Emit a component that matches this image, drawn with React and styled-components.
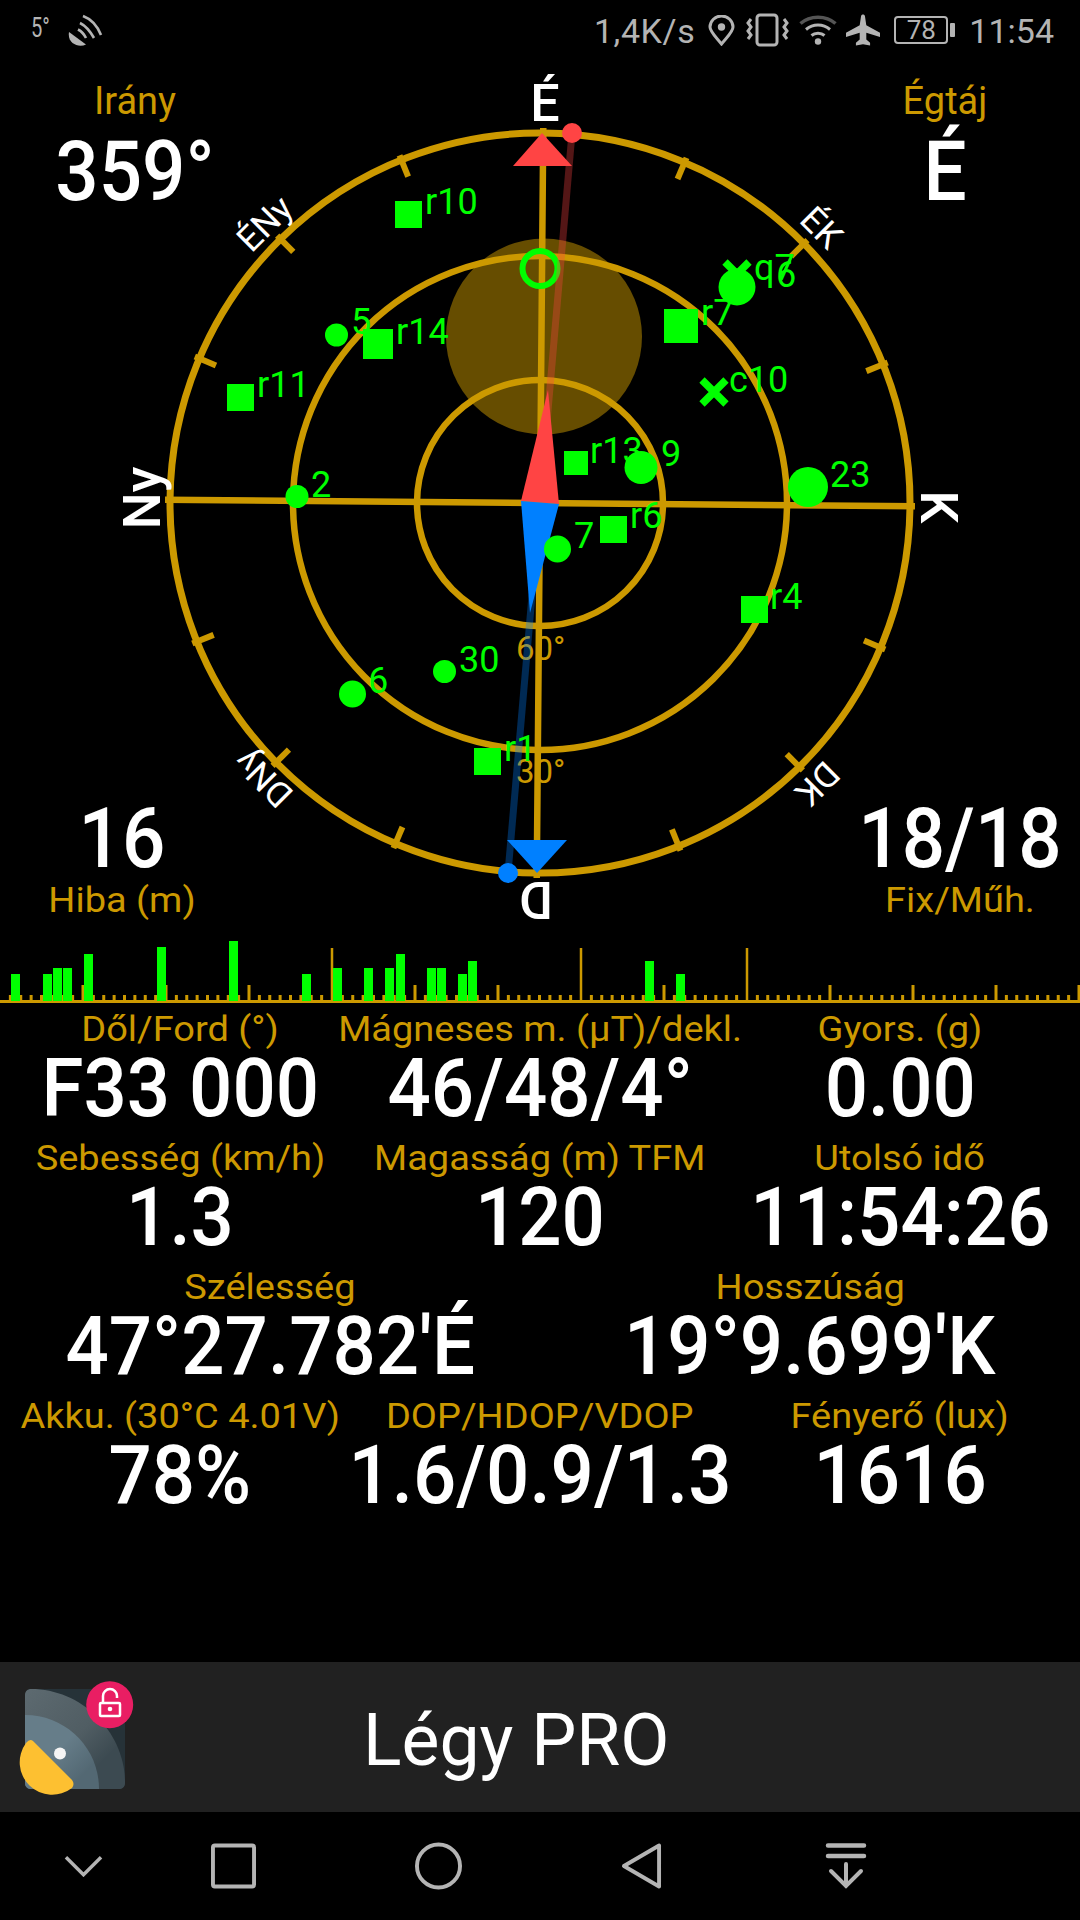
import React from "react";
import styled, { createGlobalStyle } from "styled-components";

const GOLD = "#cc9900";
const GREEN = "#00ff00";
const ROTATION = 0.5;
const CX = 540;
const CY = 503;

const GlobalStyle = createGlobalStyle`
  html, body {
    margin: 0;
    padding: 0;
    background: #000;
  }
  body {
    font-family: Roboto, "Liberation Sans", sans-serif;
    color: #fff;
  }
`;

const Screen = styled.div`
  width: 1080px;
  height: 1920px;
  background: #000;
  display: flex;
  flex-direction: column;
  overflow: hidden;
`;

const StatusBar = styled.div`
  height: 60px;
  flex: none;
  display: flex;
  align-items: center;
  justify-content: space-between;
  padding: 0 26px 0 31px;
  color: #b4b4b4;
`;

const StatusGroup = styled.div`
  display: flex;
  align-items: center;
`;

const StatusText = styled.span`
  font-size: 34px;
  line-height: 1;
  margin-top: 2px;
  margin-left: ${(p) => p.$ml || 0}px;
  letter-spacing: ${(p) => p.$spacing || 0}px;
`;

const SignalDegree = styled.span`
  display: block;
  width: 17px;
  font-size: 28px;
  line-height: 1;
  margin-top: -4px;
  transform: scaleX(0.72);
  transform-origin: left center;
`;

const StatusIcon = styled.svg`
  display: block;
  flex: none;
  margin-left: ${(p) => p.$ml || 0}px;
`;

const BatteryBox = styled.div`
  width: 54px;
  height: 28px;
  margin-left: 14px;
  box-sizing: border-box;
  border: 2px solid #b4b4b4;
  border-radius: 4px;
  display: flex;
  align-items: center;
  justify-content: center;
  font-size: 26px;
  color: #b4b4b4;
  position: relative;
  &::after {
    content: "";
    position: absolute;
    right: -9px;
    top: 5px;
    width: 5px;
    height: 14px;
    background: #b4b4b4;
    border-radius: 1px;
  }
`;

const CompassPanel = styled.div`
  position: relative;
  height: 870px;
  flex: none;
`;

const CompassSvg = styled.svg`
  display: block;
`;

const Corner = styled.div`
  position: absolute;
  ${(p) => (p.$right ? "right" : "left")}: ${(p) => p.$x}px;
  top: ${(p) => p.$y}px;
  width: ${(p) => p.$w}px;
  text-align: center;
`;

const CornerLabel = styled.div`
  color: ${GOLD};
  font-size: 38px;
  line-height: 44px;
`;

const CornerFootLabel = styled.div`
  color: ${GOLD};
  font-size: 35px;
  line-height: 44px;
  transform: scaleX(1.085);
`;

const CornerValue = styled.div`
  font-size: 83px;
  font-weight: 500;
  line-height: 84px;
  transform: scaleX(0.92);
  margin-top: ${(p) => p.$mt || 0}px;
  margin-bottom: ${(p) => p.$mb || 0}px;
`;

const Histogram = styled.svg`
  display: block;
  flex: none;
`;

const DataTable = styled.div`
  display: flex;
  flex-direction: column;
  flex: none;
  padding-top: 1px;
`;

const DataRow = styled.div`
  display: flex;
  height: 129px;
`;

const DataCell = styled.div`
  flex: 1 1 0;
  min-width: 0;
  display: flex;
  flex-direction: column;
  align-items: center;
  white-space: nowrap;
`;

const DataLabel = styled.div`
  color: ${GOLD};
  font-size: 35px;
  line-height: 38px;
  padding-top: 7px;
  transform: scaleX(1.085);
`;

const DataValue = styled.div`
  font-size: 82px;
  font-weight: 500;
  line-height: 80px;
  margin-top: -1px;
  transform: scaleX(0.93);
`;

const Spacer = styled.div`
  flex: 1;
`;

const AdBanner = styled.div`
  height: 150px;
  flex: none;
  background: #212121;
  display: flex;
  align-items: center;
  padding-left: 10px;
`;

const AdIcon = styled.svg`
  flex: none;
  display: block;
`;

const AdTitle = styled.div`
  font-size: 71.5px;
  line-height: 1;
  margin-left: 218px;
  margin-top: 8px;
`;

const NavBar = styled.div`
  height: 108px;
  flex: none;
  display: flex;
  align-items: center;
  gap: 159px;
  padding-left: 64px;
`;

const NavIcon = styled.svg`
  display: block;
  flex: none;
  margin-left: ${(p) => p.$ml || 0}px;
`;

const stroke = "#b4b4b4";

const satellites = [
  { kind: "square", x: 395, y: 201, s: 27, label: "r10", lx: 425, ly: 214 },
  { kind: "circle", x: 336.5, y: 335, r: 11.5, label: "5", lx: 351, ly: 334 },
  { kind: "square", x: 363, y: 329, s: 30, label: "r14", lx: 396, ly: 344 },
  { kind: "square", x: 227, y: 384, s: 27, label: "r11", lx: 257, ly: 397 },
  { kind: "circle", x: 297, y: 496.5, r: 11.5, label: "2", lx: 311, ly: 497 },
  { kind: "square", x: 664, y: 309, s: 34, label: "r7", lx: 701, ly: 325 },
  { kind: "cross", x: 737, y: 274, r: 12, label: "q7", lx: 754, ly: 280 },
  { kind: "circle", x: 737, y: 287, r: 18.5, label: "6", lx: 776, ly: 287 },
  { kind: "cross", x: 714, y: 392, r: 12, label: "c10", lx: 729, ly: 392 },
  { kind: "square", x: 564, y: 451, s: 24, label: "r13", lx: 590, ly: 463 },
  { kind: "circle", x: 641, y: 467.5, r: 16.5, label: "9", lx: 661, ly: 466 },
  { kind: "circle", x: 808, y: 487, r: 20, label: "23", lx: 830, ly: 487 },
  { kind: "square", x: 600, y: 516, s: 27, label: "r6", lx: 630, ly: 528 },
  { kind: "circle", x: 557.5, y: 549, r: 13.5, label: "7", lx: 574, ly: 548 },
  { kind: "square", x: 741, y: 596, s: 27, label: "r4", lx: 770, ly: 609 },
  { kind: "circle", x: 444.5, y: 671.5, r: 11.5, label: "30", lx: 459, ly: 672 },
  { kind: "circle", x: 352.5, y: 694, r: 13.5, label: "6", lx: 368, ly: 693 },
  { kind: "square", x: 474, y: 748, s: 27, label: "r1", lx: 504, ly: 761 },
];

const headings = [
  { text: "É", x: 545, y: 103, a: 0, size: 52, weight: 500 },
  { text: "K", x: 938, y: 507, a: 90, size: 52, weight: 500 },
  { text: "D", x: 536, y: 899, a: 180, size: 52, weight: 500 },
  { text: "Ny", x: 142, y: 498, a: -90, size: 52, weight: 500 },
  { text: "ÉNy", x: 265, y: 224, a: -45, size: 35, weight: 400 },
  { text: "ÉK", x: 821, y: 228, a: 45, size: 35, weight: 400 },
  { text: "DK", x: 817, y: 783, a: 135, size: 35, weight: 400 },
  { text: "DNy", x: 264, y: 778, a: -135, size: 35, weight: 400 },
];

function Satellite({ sat }) {
  return (
    <g>
      {sat.kind === "square" && (
        <rect x={sat.x} y={sat.y} width={sat.s} height={sat.s} fill={GREEN} />
      )}
      {sat.kind === "circle" && <circle cx={sat.x} cy={sat.y} r={sat.r} fill={GREEN} />}
      {sat.kind === "cross" && (
        <path
          d={`M${sat.x - sat.r} ${sat.y - sat.r}L${sat.x + sat.r} ${sat.y + sat.r}M${sat.x + sat.r} ${sat.y - sat.r}L${sat.x - sat.r} ${sat.y + sat.r}`}
          stroke={GREEN}
          strokeWidth="7.5"
        />
      )}
      <text x={sat.lx} y={sat.ly} fill={GREEN} fontSize="36" fontFamily="Roboto">
        {sat.label}
      </text>
    </g>
  );
}

function Compass() {
  const ticks = [];
  for (let i = 0; i < 16; i++) {
    if (i % 4 === 0) continue;
    ticks.push(i * 22.5);
  }
  return (
    <CompassSvg width="1080" height="870" viewBox="0 60 1080 870">
      <g transform={`rotate(${ROTATION} ${CX} ${CY})`} stroke={GOLD} fill="none">
        <circle cx={CX} cy={CY} r="370" strokeWidth="7" />
        <circle cx={CX} cy={CY} r="247" strokeWidth="6.5" />
        <circle cx={CX} cy={CY} r="123" strokeWidth="6.5" />
        <path d={`M${CX - 375} ${CY}H${CX + 375}M${CX} ${CY - 375}V${CY + 375}`} strokeWidth="6.5" />
        {ticks.map((a) => (
          <path
            key={a}
            d={`M${CX} ${CY - 375}V${CY - 352}`}
            strokeWidth="6"
            transform={`rotate(${a} ${CX} ${CY})`}
          />
        ))}
      </g>
      <text x="516" y="660" fill={GOLD} fontSize="33" fontFamily="Roboto">60°</text>
      <text x="516" y="783" fill={GOLD} fontSize="33" fontFamily="Roboto">30°</text>

      <circle cx="544" cy="336.5" r="98" fill={GOLD} fillOpacity="0.5" />
      <circle cx="540" cy="268.5" r="17.5" fill="none" stroke={GREEN} strokeWidth="6" />

      <path d="M513 166L542 133L572 166Z" fill="#ff4444" />
      <path d="M507 840H567L537 873Z" fill="#0080ff" />
      <path d="M540 503L572 133" stroke="#ff4444" strokeWidth="7" strokeOpacity="0.33" />
      <path d="M540 503L508 873" stroke="#0080ff" strokeWidth="7" strokeOpacity="0.33" />
      <circle cx="572" cy="133" r="10" fill="#ff4444" />
      <circle cx="508" cy="873" r="10" fill="#0080ff" />
      <path d="M521 501L559 504L548 390Z" fill="#ff4444" />
      <path d="M521 501L559 504L530 613Z" fill="#0080ff" />

      {satellites.map((s, i) => (
        <Satellite key={i} sat={s} />
      ))}

      {headings.map((h) => (
        <text
          key={h.text}
          x={h.x}
          y={h.y}
          fill="#fff"
          fontSize={h.size}
          fontWeight={h.weight}
          fontFamily="Roboto"
          textAnchor="middle"
          dominantBaseline="central"
          transform={`rotate(${h.a} ${h.x} ${h.y})`}
        >
          {h.text}
        </text>
      ))}
    </CompassSvg>
  );
}

const bars = [
  [11, 974], [43, 974], [53, 968], [63, 968], [84, 954], [157, 947], [229, 941],
  [302, 974], [333, 968], [364, 968], [385, 968], [396, 954], [427, 968], [437, 968],
  [458, 974], [468, 961], [645, 961], [676, 974],
];

function SignalChart() {
  const ticks = [];
  for (let i = 1; i * 10.375 < 1080; i++) {
    const x = i * 10.375;
    let top = 995;
    let w = 3;
    if (i % 8 === 0) {
      top = [32, 56, 72].includes(i) ? 948 : 985;
      w = [32, 56, 72].includes(i) ? 2.5 : 3;
    }
    ticks.push(<rect key={i} x={x - w / 2} y={top - 930} width={w} height={1003 - top} fill={GOLD} />);
  }
  return (
    <Histogram width="1080" height="73" viewBox="0 0 1080 73">
      {ticks}
      <rect x="0" y="70" width="1080" height="3" fill={GOLD} />
      {bars.map(([x, top]) => (
        <rect key={x} x={x} y={top - 930} width="9" height={1001 - top} fill={GREEN} />
      ))}
    </Histogram>
  );
}

const rows = [
  [
    ["Dől/Ford (°)", "F33 000"],
    ["Mágneses m. (µT)/dekl.", "46/48/4°"],
    ["Gyors. (g)", "0.00"],
  ],
  [
    ["Sebesség (km/h)", "1.3"],
    ["Magasság (m) TFM", "120"],
    ["Utolsó idő", "11:54:26"],
  ],
  [
    ["Szélesség", "47°27.782'É"],
    ["Hosszúság", "19°9.699'K"],
  ],
  [
    ["Akku. (30°C 4.01V)", "78%"],
    ["DOP/HDOP/VDOP", "1.6/0.9/1.3"],
    ["Fényerő (lux)", "1616"],
  ],
];

export default function App() {
  return (
    <Screen>
      <GlobalStyle />
      <StatusBar>
        <StatusGroup>
          <SignalDegree>5°</SignalDegree>
          <StatusIcon $ml={20} width="36" height="34" viewBox="0 0 36 34" fill="none" stroke={stroke} strokeWidth="2.6">
            <path d="M1 19L18 31.5C11 35 -1 31 1 19Z" fill={stroke} stroke="none" />
            <path d="M15 3C23 6 29 12 33 22M12 10C18 13 22 18 26 25M10 16.5C13 18 16 21 18 25" />
          </StatusIcon>
        </StatusGroup>
        <StatusGroup>
          <StatusText $spacing={0.6}>1,4K/s</StatusText>
          <StatusIcon $ml={13} width="27" height="31" viewBox="0 0 27 31" fill="none" stroke={stroke} strokeWidth="3">
            <path d="M13.5 29C7 21 2 16.5 2 12a11.5 11 0 0 1 23 0C25 16.5 20 21 13.5 29Z" />
            <circle cx="13.5" cy="12" r="2.2" fill={stroke} />
          </StatusIcon>
          <StatusIcon $ml={11} width="43" height="34" viewBox="0 0 43 34" fill="none" stroke={stroke} strokeWidth="3">
            <rect x="11" y="2" width="20" height="30" rx="3" />
            <path d="M5 6L2 10L5 14L2 18L5 22L2 26M38 6L41 10L38 14L41 18L38 22L41 26" />
          </StatusIcon>
          <StatusIcon $ml={10} width="38" height="32" viewBox="0 0 38 32" fill="none" stroke={stroke} strokeWidth="3">
            <path d="M1.5 9.5C11 1 27 1 36.5 9.5" stroke="#555" strokeWidth="3.5" />
            <path d="M7 15.5C14 9.5 24 9.5 31 15.5M12.5 21.5C16 18.5 22 18.5 25.5 21.5" />
            <circle cx="19" cy="27.5" r="3.2" fill={stroke} stroke="none" />
          </StatusIcon>
          <StatusIcon $ml={9} width="34" height="34" viewBox="0 0 36 34">
            <path fill={stroke} d="M16 2C17 0 19 0 20 2L21.5 12L36 20V24.5L21.5 20V27L25.5 30.5V33.5L18 32L10.5 33.5V30.5L14.5 27V20L0 24.5V20L14.5 12Z" />
          </StatusIcon>
          <BatteryBox>78</BatteryBox>
          <StatusText $ml={21}>11:54</StatusText>
        </StatusGroup>
      </StatusBar>

      <CompassPanel>
        <Compass />
        <Corner $x={35} $y={19} $w={200}>
          <CornerLabel>Irány</CornerLabel>
          <CornerValue $mt={7}>359°</CornerValue>
        </Corner>
        <Corner $right $x={35} $y={19} $w={200}>
          <CornerLabel>Égtáj</CornerLabel>
          <CornerValue $mt={7}>É</CornerValue>
        </Corner>
        <Corner $x={22} $y={737} $w={200}>
          <CornerValue $mb={-2}>16</CornerValue>
          <CornerFootLabel>Hiba (m)</CornerFootLabel>
        </Corner>
        <Corner $right $x={0} $y={737} $w={240}>
          <CornerValue $mb={-2}>18/18</CornerValue>
          <CornerFootLabel>Fix/Műh.</CornerFootLabel>
        </Corner>
      </CompassPanel>

      <SignalChart />

      <DataTable>
        {rows.map((row, i) => (
          <DataRow key={i}>
            {row.map(([label, value]) => (
              <DataCell key={label}>
                <DataLabel>{label}</DataLabel>
                <DataValue>{value}</DataValue>
              </DataCell>
            ))}
          </DataRow>
        ))}
      </DataTable>

      <Spacer />

      <AdBanner>
        <AdIcon width="135" height="130" viewBox="0 0 135 130">
          <defs>
            <linearGradient id="band" x1="0" y1="0" x2="1" y2="1">
              <stop offset="0" stopColor="#5d6a70" />
              <stop offset="0.5" stopColor="#505d63" />
              <stop offset="0.75" stopColor="#3c4a51" />
            </linearGradient>
            <linearGradient id="face" x1="0" y1="0" x2="1" y2="1">
              <stop offset="0.45" stopColor="#667d89" />
              <stop offset="0.8" stopColor="#536873" />
            </linearGradient>
          </defs>
          <rect x="15" y="17" width="100" height="100" rx="6" fill="#263238" />
          <path d="M21 17C72 17 115 60 115 111C115 115 112 117 109 117H21C18 117 15 115 15 111V23C15 19 18 17 21 17Z" fill="url(#band)" />
          <path d="M15 43C56 43 89 76 89 117H21C18 117 15 115 15 111Z" fill="url(#face)" />
          <circle cx="50" cy="81.5" r="6" fill="#f5f5f5" />
          <path d="M23 69L62 108Q65 112 62 116A32.5 32.5 0 0 1 16 71Q20 66 23 69Z" fill="#fdc031" />
          <circle cx="99.7" cy="32.7" r="23.5" fill="#e91e63" />
          <g fill="none" stroke="#fff" strokeWidth="2.5">
            <rect x="90" y="31" width="20" height="13" rx="1" />
            <path d="M93 31V24a7 7 0 0 1 14 0V26" />
          </g>
          <circle cx="100" cy="37" r="2.3" fill="#fff" />
        </AdIcon>
        <AdTitle>Légy PRO</AdTitle>
      </AdBanner>

      <NavBar>
        <NavIcon width="39" height="22" viewBox="0 0 40 22" fill="none" stroke={stroke} strokeWidth="3.5" style={{ marginRight: -51 }}>
          <path d="M2 2L20 20L38 2" />
        </NavIcon>
        <NavIcon width="45" height="46" viewBox="0 0 46 46" fill="none" stroke={stroke} strokeWidth="4">
          <rect x="2" y="2" width="42" height="42" rx="2" />
        </NavIcon>
        <NavIcon width="47" height="48" viewBox="0 0 48 48" fill="none" stroke={stroke} strokeWidth="4">
          <circle cx="24" cy="24" r="22" />
        </NavIcon>
        <NavIcon width="41" height="48" viewBox="0 0 42 48" fill="none" stroke={stroke} strokeWidth="4" strokeLinejoin="round">
          <path d="M39 3V45L3 24Z" />
        </NavIcon>
        <NavIcon $ml={4} width="42" height="46" viewBox="0 0 42 46" fill="none" stroke={stroke} strokeLinecap="round">
          <path d="M3 2.5H39M3 13H39" strokeWidth="4.5" />
          <path d="M21 21V43M6 28L21 43L36 28" strokeWidth="4" />
        </NavIcon>
      </NavBar>
    </Screen>
  );
}
